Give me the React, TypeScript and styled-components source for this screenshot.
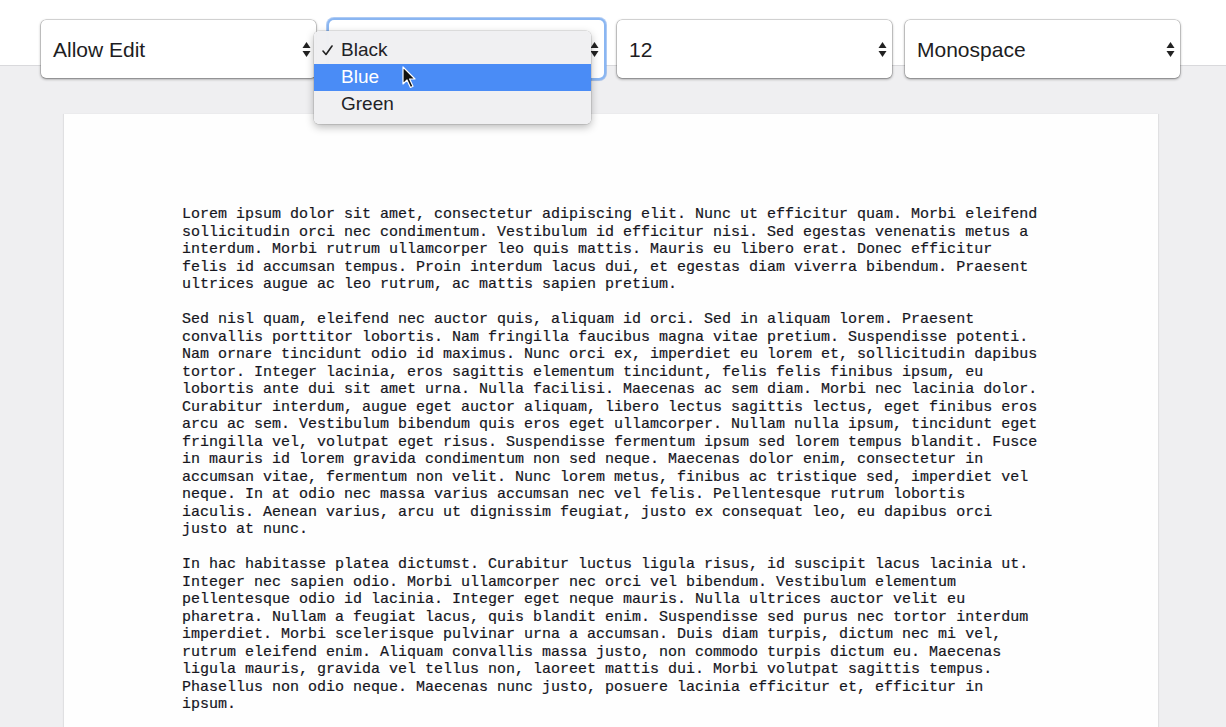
import React from "react";
import styled, { createGlobalStyle } from "styled-components";

const GlobalStyle = createGlobalStyle`
  html, body { margin: 0; padding: 0; }
  body {
    background: #efeff1;
    font-family: "Liberation Sans", Arial, sans-serif;
    overflow: hidden;
  }
`;

const Page = styled.div`
  width: 1226px;
  min-height: 727px;
  background: #efeff1;
`;

const Toolbar = styled.div`
  position: relative;
  z-index: 2;
  box-sizing: border-box;
  height: 66px;
  background: #ffffff;
  border-bottom: 1px solid #d9d9dc;
  display: flex;
  align-items: flex-start;
  gap: 13px;
  padding: 20px 0 0 41px;
`;

const SelectWrap = styled.div`
  position: relative;
  width: 275px;
  flex: 0 0 275px;
`;

const SelectBox = styled.div<{ $focused?: boolean }>`
  box-sizing: border-box;
  height: 58px;
  background: #ffffff;
  border-radius: 5px;
  display: flex;
  align-items: center;
  justify-content: space-between;
  padding: 0 5px 0 12px;
  box-shadow: ${(p) =>
    p.$focused
      ? "0 0 0 2px #8ab6f2, 0 0 0 3px rgba(110,160,235,0.55), 0 1px 3px rgba(0,0,0,0.35)"
      : "0 0 0 0.5px rgba(0,0,0,0.25), 0 1px 3px rgba(0,0,0,0.45)"};
`;

const SelectLabel = styled.span`
  font-size: 21px;
  color: #1d1d22;
  padding-top: 1px;
`;

const ArrowSvg = styled.svg`
  width: 9px;
  height: 15px;
  flex: 0 0 auto;
  margin-left: auto;
`;

const Arrows = () => (
  <ArrowSvg viewBox="0 0 9 15">
    <path d="M4.5 0 L8.5 6 L0.5 6 Z" fill="#222" />
    <path d="M0.5 9 L8.5 9 L4.5 15 Z" fill="#222" />
  </ArrowSvg>
);

const Menu = styled.div`
  position: absolute;
  left: -15px;
  top: 11px;
  width: 277px;
  box-sizing: border-box;
  padding: 6px 0 6px;
  background: rgba(240, 240, 242, 0.98);
  border-radius: 5px;
  box-shadow: 0 0 0 0.5px rgba(0,0,0,0.18), 0 3px 8px rgba(0,0,0,0.28);
  z-index: 3;
`;

const MenuItem = styled.div<{ $active?: boolean }>`
  position: relative;
  box-sizing: border-box;
  height: 27px;
  display: flex;
  align-items: center;
  padding: 0 0 2px 27px;
  font-size: 19px;
  color: ${(p) => (p.$active ? "#ffffff" : "#222226")};
  background: ${(p) => (p.$active ? "#4a8cf6" : "transparent")};
`;

const CheckSvg = styled.svg`
  position: absolute;
  left: 8px;
  top: 8px;
  width: 11px;
  height: 11px;
`;

const Cursor = styled.svg`
  position: absolute;
  left: 88px;
  top: 35px;
  width: 15px;
  height: 23px;
  z-index: 4;
`;

const Paper = styled.div`
  box-sizing: border-box;
  margin: 48px 0 0 64px;
  width: 1094px;
  min-height: 640px;
  background: #fefefe;
  box-shadow: -1px 0 1px rgba(0,0,0,0.06), 1px 0 1px rgba(0,0,0,0.06);
  padding: 92px 0 0 118px;
`;

const TextBlock = styled.div`
  width: 862px;
  font-family: "Liberation Mono", "Courier New", monospace;
  font-size: 15px;
  line-height: 17.5px;
  color: #16161e;
  -webkit-text-stroke: 0.2px #16161e;
`;

const Para = styled.p`
  margin: 0 0 17.5px;
`;

const paragraphs = [
  "Lorem ipsum dolor sit amet, consectetur adipiscing elit. Nunc ut efficitur quam. Morbi eleifend sollicitudin orci nec condimentum. Vestibulum id efficitur nisi. Sed egestas venenatis metus a interdum. Morbi rutrum ullamcorper leo quis mattis. Mauris eu libero erat. Donec efficitur felis id accumsan tempus. Proin interdum lacus dui, et egestas diam viverra bibendum. Praesent ultrices augue ac leo rutrum, ac mattis sapien pretium.",
  "Sed nisl quam, eleifend nec auctor quis, aliquam id orci. Sed in aliquam lorem. Praesent convallis porttitor lobortis. Nam fringilla faucibus magna vitae pretium. Suspendisse potenti. Nam ornare tincidunt odio id maximus. Nunc orci ex, imperdiet eu lorem et, sollicitudin dapibus tortor. Integer lacinia, eros sagittis elementum tincidunt, felis felis finibus ipsum, eu lobortis ante dui sit amet urna. Nulla facilisi. Maecenas ac sem diam. Morbi nec lacinia dolor. Curabitur interdum, augue eget auctor aliquam, libero lectus sagittis lectus, eget finibus eros arcu ac sem. Vestibulum bibendum quis eros eget ullamcorper. Nullam nulla ipsum, tincidunt eget fringilla vel, volutpat eget risus. Suspendisse fermentum ipsum sed lorem tempus blandit. Fusce in mauris id lorem gravida condimentum non sed neque. Maecenas dolor enim, consectetur in accumsan vitae, fermentum non velit. Nunc lorem metus, finibus ac tristique sed, imperdiet vel neque. In at odio nec massa varius accumsan nec vel felis. Pellentesque rutrum lobortis iaculis. Aenean varius, arcu ut dignissim feugiat, justo ex consequat leo, eu dapibus orci justo at nunc.",
  "In hac habitasse platea dictumst. Curabitur luctus ligula risus, id suscipit lacus lacinia ut. Integer nec sapien odio. Morbi ullamcorper nec orci vel bibendum. Vestibulum elementum pellentesque odio id lacinia. Integer eget neque mauris. Nulla ultrices auctor velit eu pharetra. Nullam a feugiat lacus, quis blandit enim. Suspendisse sed purus nec tortor interdum imperdiet. Morbi scelerisque pulvinar urna a accumsan. Duis diam turpis, dictum nec mi vel, rutrum eleifend enim. Aliquam convallis massa justo, non commodo turpis dictum eu. Maecenas ligula mauris, gravida vel tellus non, laoreet mattis dui. Morbi volutpat sagittis tempus. Phasellus non odio neque. Maecenas nunc justo, posuere lacinia efficitur et, efficitur in ipsum.",
];

export default function App() {
  return (
    <Page>
      <GlobalStyle />
      <Toolbar>
        <SelectWrap>
          <SelectBox>
            <SelectLabel>Allow Edit</SelectLabel>
            <Arrows />
          </SelectBox>
        </SelectWrap>
        <SelectWrap>
          <SelectBox $focused>
            <Arrows />
          </SelectBox>
          <Menu>
            <MenuItem>
              <CheckSvg viewBox="0 0 11 11">
                <path
                  d="M1 6 L4 9.5 L10 1"
                  fill="none"
                  stroke="#222"
                  strokeWidth="1.6"
                  strokeLinecap="round"
                  strokeLinejoin="round"
                />
              </CheckSvg>
              Black
            </MenuItem>
            <MenuItem $active>Blue</MenuItem>
            <MenuItem>Green</MenuItem>
            <Cursor viewBox="0 0 15 23">
              <path
                d="M1 1 L1 18 L5 14 L8.5 21.5 L11 20.3 L7.6 13 L13 13 Z"
                fill="#111"
                stroke="#fff"
                strokeWidth="1.2"
                strokeLinejoin="round"
              />
            </Cursor>
          </Menu>
        </SelectWrap>
        <SelectWrap>
          <SelectBox>
            <SelectLabel>12</SelectLabel>
            <Arrows />
          </SelectBox>
        </SelectWrap>
        <SelectWrap>
          <SelectBox>
            <SelectLabel>Monospace</SelectLabel>
            <Arrows />
          </SelectBox>
        </SelectWrap>
      </Toolbar>
      <Paper>
        <TextBlock>
          {paragraphs.map((t, i) => (
            <Para key={i}>{t}</Para>
          ))}
        </TextBlock>
      </Paper>
    </Page>
  );
}
